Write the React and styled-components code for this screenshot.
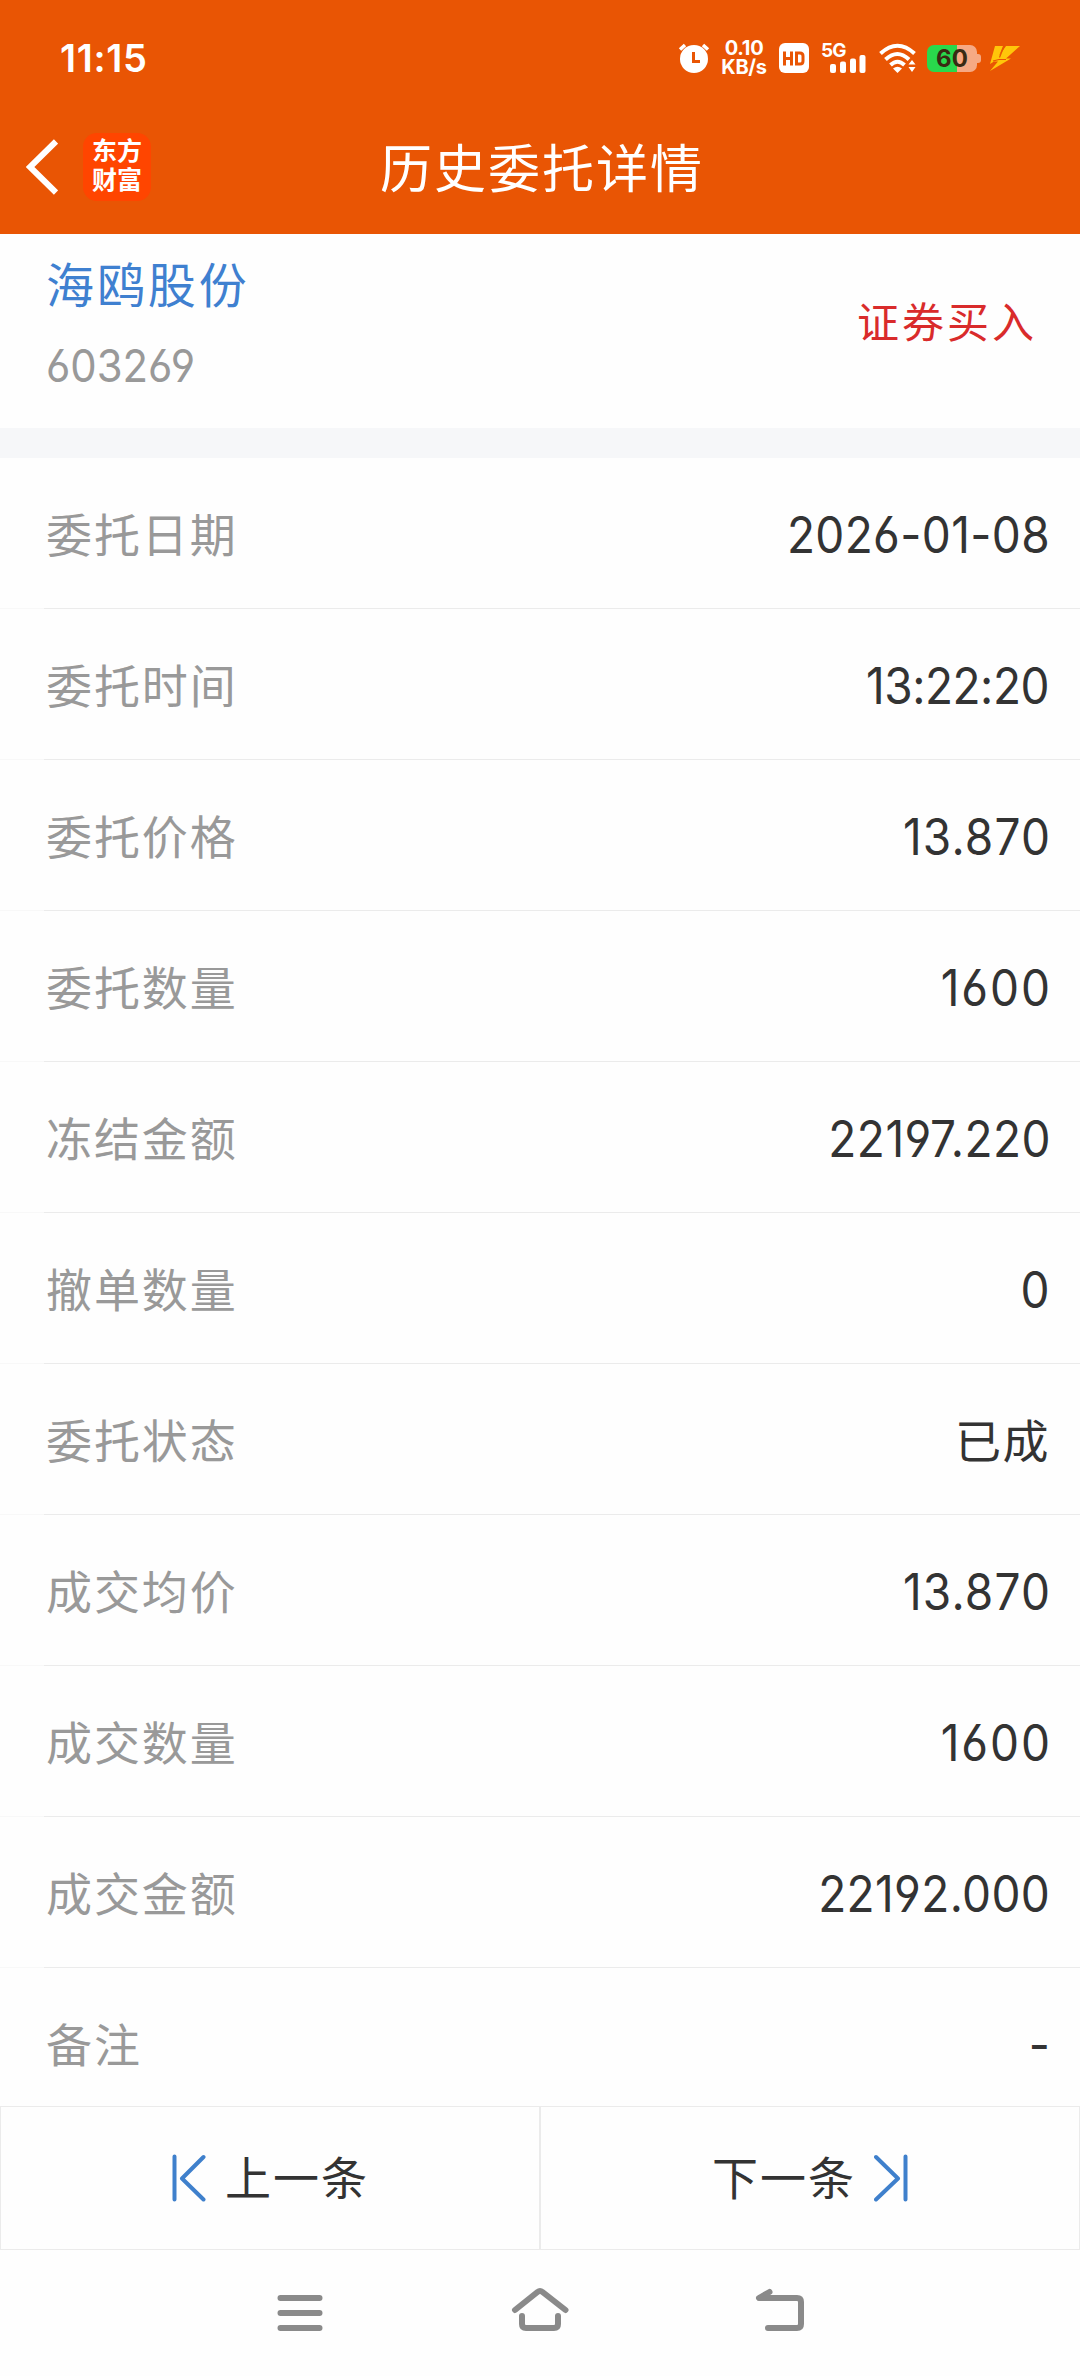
import styled, { createGlobalStyle } from 'styled-components'

const rows = [
  { label: '委托日期', value: '2026-01-08', tracking: 0.4 },
  { label: '委托时间', value: '13:22:20', tracking: -0.5 },
  { label: '委托价格', value: '13.870', tracking: 1.3 },
  { label: '委托数量', value: '1600', tracking: 2.1 },
  { label: '冻结金额', value: '22197.220', tracking: 0.5 },
  { label: '撤单数量', value: '0' },
  { label: '委托状态', value: '已成', cjk: true },
  { label: '成交均价', value: '13.870', tracking: 1.3 },
  { label: '成交数量', value: '1600', tracking: 2.1 },
  { label: '成交金额', value: '22192.000', tracking: 0.4 },
  { label: '备注', value: '-' },
]

export default function App() {
  return (
    <Page>
      <GlobalStyle />
      <Header>
        <StatusBar>
          <Clock>11:15</Clock>
          <StatusIcons />
        </StatusBar>
        <TitleBar>
          <TitleSide>
            <svg width='32' height='56' viewBox='0 0 32 56' fill='none' stroke='#fff' strokeWidth='6'>
              <path d='M30 2.5 L4 28 L30 53.5' />
            </svg>
            <Logo>
              <span>东方</span>
              <span>财富</span>
            </Logo>
          </TitleSide>
          <Title>历史委托详情</Title>
          <TitleSide />
        </TitleBar>
      </Header>
      <Stock>
        <div>
          <StockName>海鸥股份</StockName>
          <StockCode>603269</StockCode>
        </div>
        <Direction>证券买入</Direction>
      </Stock>
      <List>
        {rows.map((row) => (
          <Row key={row.label}>
            <Label>{row.label}</Label>
            {row.cjk ? (
              <TextValue>{row.value}</TextValue>
            ) : (
              <NumValue $tracking={row.tracking}>{row.value}</NumValue>
            )}
          </Row>
        ))}
      </List>
      <Pager>
        <PagerButton>
          <svg width='36' height='48' viewBox='0 0 36 48' {...pagerStroke}>
            <path d='M3.5 2.5V45.5M32.5 3L11 24.5L32.5 45.5' />
          </svg>
          <PagerText>上一条</PagerText>
        </PagerButton>
        <PagerButton>
          <PagerText>下一条</PagerText>
          <svg width='34' height='48' viewBox='0 0 34 48' {...pagerStroke}>
            <path d='M31.5 2.5V45.5M2 3L24 24.5L2 45.5' />
          </svg>
        </PagerButton>
      </Pager>
      <NavBar>
        <NavIcon d='M10.5 15H49.5M10.5 30H49.5M10.5 45H49.5' />
        <NavIcon d='M5 27L27.500 9Q30 7 32.500 9L55.500 27M12 33V41Q12 45 16 45H44Q48 45 48 41V33' />
        <NavIcon d='M19.500 9L9 15H47Q51 15 51 19V41Q51 45 47 45H18' />
      </NavBar>
    </Page>
  )
}

const pagerStroke = { fill: 'none', stroke: '#3f80cc', strokeWidth: 4, strokeLinecap: 'round', strokeLinejoin: 'round' }

function NavIcon({ d }) {
  return (
    <svg width='60' height='60' viewBox='0 0 60 60' fill='none' stroke='#8a8a8a' strokeWidth='6' strokeLinecap='round' strokeLinejoin='round'>
      <path d={d} />
    </svg>
  )
}

function StatusIcons() {
  return (
    <Icons>
      <svg width='32' height='32' viewBox='0 0 32 32'>
        <circle cx='16' cy='17' r='14' fill='#fff' />
        <path d='M2 7.500L7 3M30 7.500L25 3' stroke='#fff' strokeWidth='3.500' />
        <path d='M15.500 10V19.500H22' stroke='#e95504' strokeWidth='3' fill='none' />
      </svg>
      <Speed>
        <span>0.10</span>
        <span>KB/s</span>
      </Speed>
      <Hd>
        <svg width='22' height='15' viewBox='0 0 22 15' fill='none' stroke='#e95504' strokeWidth='3'>
          <path d='M1.500 0.500V14.500M8.500 0.500V14.500M1.500 7.500H8.500M13.500 2H17Q20 2 20 5V10Q20 13 17 13H13.500Z' />
        </svg>
      </Hd>
      <Signal>
        <Network>5G</Network>
        <svg width='36' height='18' viewBox='0 0 36 18' fill='#fff'>
          <rect x='0' y='9' width='6' height='9' rx='2' />
          <rect x='10' y='6.500' width='6' height='11.500' rx='2' />
          <rect x='20' y='3.500' width='6' height='14.500' rx='2' />
          <rect x='29.500' y='0' width='6' height='18' rx='2' />
        </svg>
      </Signal>
      <Wifi width='38' height='32' viewBox='0 0 38 32' fill='none' stroke='#fff' strokeWidth='4'>
        <path d='M1.500 11.500Q18.500 -4 35.500 11.500' />
        <path d='M6.500 17.500Q18.500 6.500 30 17.500' />
        <path d='M11.500 23Q18.500 16.500 25.500 23' />
        <path d='M14 26.500Q18.500 23 23 26.500L18.500 31Z' fill='#fff' stroke='none' />
        <path d='M33 18L36.500 22.500H29.500ZM33 30L36.500 25H29.500Z' fill='#fff' stroke='none' />
      </Wifi>
      <Battery>60</Battery>
      <BatteryTip />
      <svg width='32' height='28' viewBox='0 0 32 28' fill='#ffc60a'>
        <path d='M6 2H14L10 12L17 2H31L17 14.500H22L1 27L9 17.500H5L1 20Z' />
        <path d='M15.500 1L10.500 13.500M4 17L10 15.500H17' stroke='#e95504' strokeWidth='1.200' fill='none' />
      </svg>
    </Icons>
  )
}

const GlobalStyle = createGlobalStyle`
  body {
    margin: 0;
    background: #fefefe;
    font-family: Inter, 'Noto Sans CJK SC', sans-serif;
  }
  * {
    box-sizing: border-box;
  }
  svg {
    display: block;
    flex: none;
  }
`

const cjk = `'Noto Sans CJK SC', sans-serif`

const Page = styled.div`
  width: 1080px;
  height: 2376px;
  display: flex;
  flex-direction: column;
  overflow: hidden;
  background: #fefefe;
`

const Header = styled.header`
  height: 234px;
  flex: none;
  background: #e95504;
  color: #fff;
`

const StatusBar = styled.div`
  height: 116px;
  display: flex;
  align-items: center;
  justify-content: space-between;
  padding: 0 59px 0 60px;
`

const Clock = styled.div`
  font-size: 38px;
  font-weight: 600;
  letter-spacing: 0.7px;
`

const Icons = styled.div`
  display: flex;
  align-items: center;
`

const Speed = styled.div`
  display: flex;
  flex-direction: column;
  width: 48px;
  margin: 0 11px 0 10px;
  font-size: 20px;
  font-weight: 700;
  line-height: 19px;
  text-align: center;
  letter-spacing: -0.3px;
`

const Hd = styled.div`
  width: 30px;
  height: 30px;
  display: flex;
  align-items: center;
  justify-content: center;
  border-radius: 6px;
  background: #fff;
`

const Signal = styled.div`
  width: 45px;
  height: 30px;
  margin-left: 12px;
  display: flex;
  flex-direction: column;
  justify-content: space-between;
  svg {
    align-self: flex-end;
    margin-top: -3px;
  }
`

const Network = styled.div`
  font-size: 19px;
  font-weight: 700;
  line-height: 15px;
  letter-spacing: -1px;
`

const Wifi = styled.svg`
  margin: 0 10px 0 13px;
`

const Battery = styled.div`
  width: 50px;
  height: 27px;
  border-radius: 7px;
  background: linear-gradient(90deg, #29d94c 30px, #f6a984 30px);
  color: #3a2a12;
  font-size: 24px;
  font-weight: 700;
  line-height: 27px;
  text-align: center;
`

const BatteryTip = styled.div`
  width: 4px;
  height: 9px;
  margin-right: 8px;
  border-radius: 0 3px 3px 0;
  background: #f6a984;
`

const TitleBar = styled.div`
  height: 102px;
  display: flex;
  align-items: center;
`

const TitleSide = styled.div`
  flex: 1;
  display: flex;
  align-items: center;
  padding-left: 26px;
`

const Logo = styled.div`
  width: 68px;
  height: 68px;
  margin-left: 25px;
  padding-top: 2px;
  border-radius: 14px;
  background: #ff4500;
  display: flex;
  flex-direction: column;
  align-items: center;
  font-family: ${cjk};
  font-size: 25px;
  font-weight: 700;
  line-height: 29px;
`

const Title = styled.h1`
  margin: 0 -2px 3px 2px;
  font-family: ${cjk};
  font-size: 52px;
  font-weight: 400;
  letter-spacing: 2px;
  line-height: 74px;
`

const Stock = styled.section`
  height: 224px;
  flex: none;
  display: flex;
  align-items: flex-start;
  justify-content: space-between;
  padding: 13px 43px 0 46px;
  border-bottom: 30px solid #f6f7f9;
`

const StockName = styled.div`
  font-family: ${cjk};
  font-size: 48px;
  letter-spacing: 2.9px;
  line-height: 70px;
  color: #3f80d0;
`

const StockCode = styled.div`
  font-size: 45px;
  line-height: 60px;
  margin-top: 19px;
  color: #999;
  font-feature-settings: 'cv03', 'cv04';
  transform: scaleX(0.93);
  transform-origin: left;
`

const Direction = styled.div`
  margin-top: 43px;
  font-family: ${cjk};
  font-size: 42px;
  letter-spacing: 3px;
  line-height: 60px;
  color: #d92b2b;
`

const List = styled.main`
  flex: 1;
  min-height: 0;
  overflow: hidden;
`

const Row = styled.div`
  height: 151px;
  display: flex;
  align-items: center;
  justify-content: space-between;
  padding: 3px 30px 0 46px;
  border-bottom: 1px solid;
  border-image: linear-gradient(90deg, #f8f8f8 45px, #ebebeb 45px) 1;
`

const Label = styled.div`
  margin-bottom: 6px;
  font-family: ${cjk};
  font-size: 46px;
  letter-spacing: 1.9px;
  color: #999;
`

const TextValue = styled.div`
  margin-bottom: 6px;
  font-family: ${cjk};
  font-size: 46px;
  letter-spacing: 1.5px;
  color: #333;
`

const NumValue = styled.div`
  margin-right: ${({ $tracking = 0 }) => -$tracking}px;
  font-size: 50px;
  letter-spacing: ${({ $tracking = 0 }) => $tracking}px;
  color: #333;
  font-feature-settings: 'cv03', 'cv04';
  transform: scaleX(0.92);
  transform-origin: right;
`

const Pager = styled.footer`
  height: 144px;
  flex: none;
  display: flex;
`

const PagerButton = styled.button`
  flex: 1;
  display: flex;
  align-items: center;
  justify-content: center;
  gap: 18px;
  padding: 0;
  border: 1px solid #ebebeb;
  background: none;
  color: #333;
`

const PagerText = styled.span`
  margin-bottom: 6px;
  font-family: ${cjk};
  font-size: 46px;
  letter-spacing: 2px;
`

const NavBar = styled.nav`
  width: 720px;
  height: 126px;
  flex: none;
  margin: 0 auto;
  display: grid;
  grid-template-columns: repeat(3, 1fr);
  place-items: center;
`
